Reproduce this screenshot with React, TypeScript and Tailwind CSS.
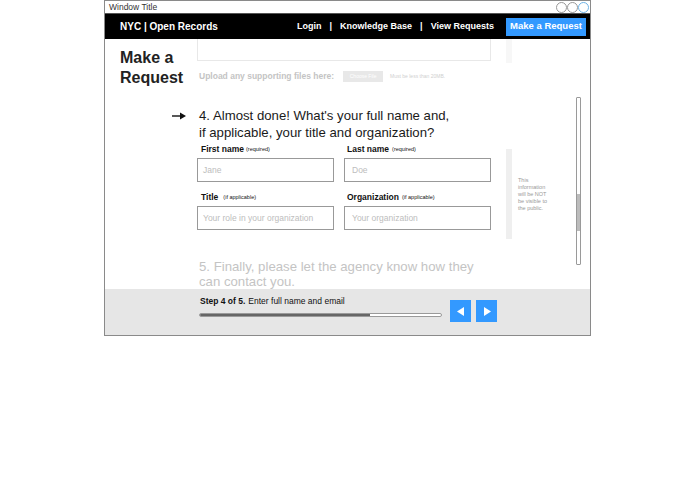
import React from "react";

const font = { fontFamily: '"Liberation Sans", Arial, sans-serif' };

export default function App() {
  return (
    <div className="w-[695px] h-[494px] bg-white" style={font}>
      <div className="ml-[104px] w-[487px] border border-[#8a8a8a] bg-white">
        {/* title bar */}
        <div className="h-[12px] flex items-center justify-between pl-[4px] pr-[1px] bg-white">
          <span className="text-[8.5px] leading-none text-[#333]">Window Title</span>
          <div className="flex">
            <span className="w-[11px] h-[11px] rounded-full border border-[#999] bg-white" />
            <span className="w-[11px] h-[11px] rounded-full border border-[#999] bg-white" />
            <span className="w-[11px] h-[11px] rounded-full border border-[#6fb3e6] bg-white" />
          </div>
        </div>
        {/* nav */}
        <div className="h-[26px] border-t border-[#555] bg-black flex items-center pl-[15px] pr-[4px] text-white font-bold text-[9px]">
          <span className="text-[10px]">NYC | Open Records</span>
          <div className="ml-auto flex items-center">
            <span>Login</span>
            <span className="mx-[8px]">|</span>
            <span>Knowledge Base</span>
            <span className="mx-[8px]">|</span>
            <span>View Requests</span>
            <span className="ml-[12px] w-[80px] h-[18px] bg-[#3399ff] flex items-center justify-center text-[9.5px]">Make a Request</span>
          </div>
        </div>
        {/* content */}
        <div className="h-[250px] flex overflow-hidden">
          <div className="w-[92px] pl-[15px] pt-[9px]">
            <div className="text-[16px] leading-[20px] font-bold text-[#222]">
              Make a<br />Request
            </div>
          </div>
          <div className="w-[294px] flex flex-col">
            <div className="h-[22px] border border-t-0 border-[#e8e8e8]" />
            <div className="mt-[10px] h-[11px] flex items-center pl-[2px]">
              <span className="text-[8.5px] font-bold text-[#c4c4c4]">Upload any supporting files here:</span>
              <span className="ml-[9px] w-[40px] h-[11px] bg-[#e8e8e8] text-white text-[5px] flex items-center justify-center">Choose File</span>
              <span className="ml-[7px] text-[5px] text-[#cfcfcf]">Must be less than 20MB.</span>
            </div>
            <div className="mt-[25px] flex -ml-[25px]">
              <div className="w-[25px] h-[17px] flex items-center">
                <svg width="14" height="8" viewBox="0 0 14 8">
                  <line x1="0" y1="4" x2="11" y2="4" stroke="#111" strokeWidth="1.4" />
                  <polygon points="8,0.5 14,4 8,7.5" fill="#111" />
                </svg>
              </div>
              <div className="pl-[2px] text-[13.2px] leading-[17px] text-[#1a1a1a]">
                4. Almost done! What's your full name and,<br />if applicable, your title and organization?
              </div>
            </div>
            <div className="mt-[3px] grid grid-cols-[137px_147px] gap-x-[10px]">
              <div>
                <div className="h-[10px] flex items-center pl-[4px] text-[8.5px] font-bold text-[#111]">
                  First name<span className="ml-[2px] text-[5.5px] font-normal">(required)</span>
                </div>
                <div className="mt-[4px] h-[24px] border border-[#999] flex items-center pl-[5px] text-[8.5px] text-[#bdbdbd]">Jane</div>
              </div>
              <div>
                <div className="h-[10px] flex items-center pl-[3px] text-[8.5px] font-bold text-[#111]">
                  Last name<span className="ml-[3px] text-[5.5px] font-normal">(required)</span>
                </div>
                <div className="mt-[4px] h-[24px] border border-[#999] flex items-center pl-[7px] text-[8.5px] text-[#bdbdbd]">Doe</div>
              </div>
              <div className="mt-[10px]">
                <div className="h-[10px] flex items-center pl-[4px] text-[8.5px] font-bold text-[#111]">
                  Title<span className="ml-[5px] text-[5.5px] font-normal">(if applicable)</span>
                </div>
                <div className="mt-[4px] h-[24px] border border-[#999] flex items-center pl-[5px] text-[8.5px] text-[#bdbdbd]">Your role in your organization</div>
              </div>
              <div className="mt-[10px]">
                <div className="h-[10px] flex items-center pl-[3px] text-[8.5px] font-bold text-[#111]">
                  Organization<span className="ml-[3px] text-[5.5px] font-normal">(if applicable)</span>
                </div>
                <div className="mt-[4px] h-[24px] border border-[#999] flex items-center pl-[7px] text-[8.5px] text-[#bdbdbd]">Your organization</div>
              </div>
            </div>
            <div className="mt-[29px] pl-[2px] text-[13.2px] leading-[15px] text-[#c4c4c4] whitespace-nowrap">
              5. Finally, please let the agency know how they<br />can contact you.
            </div>
          </div>
          <div className="w-[99px] relative">
            <div className="ml-[15px] w-[6px] h-[24px] bg-[#f7f7f7]" />
            <div className="mt-[86px] ml-[15px] flex items-center">
              <div className="w-[6px] h-[90px] bg-[#efefef]" />
              <div className="ml-[6px] text-[5.5px] leading-[7px] text-[#999] w-[40px]">
                This<br />information<br />will be NOT<br />be visible to<br />the public.
              </div>
            </div>
            <div className="absolute left-[85px] top-[58px] w-[5px] h-[168px] border border-[#9a9a9a] rounded-[1px] bg-white">
              <div className="absolute left-0 right-0 top-[96px] h-[37px] bg-[#bcbcbc]" />
            </div>
          </div>
        </div>
        {/* footer */}
        <div className="h-[46px] bg-[#e6e6e6] flex pl-[94px]">
          <div className="w-[243px] pt-[7px]">
            <div className="h-[10px] flex items-center pl-[1px] text-[8.5px] text-[#111] whitespace-nowrap">
              <span className="font-bold">Step 4 of 5.</span>
              <span className="ml-[3px]">Enter full name and email</span>
            </div>
            <div className="mt-[7px] h-[4px] rounded-full border border-[#9a9a9a] bg-white overflow-hidden">
              <div className="h-full w-[170px] bg-[#666]" />
            </div>
          </div>
          <div className="ml-[8px] mt-[11px] flex gap-[5px]">
            <div className="w-[21px] h-[22px] bg-[#3399ff] flex items-center justify-center">
              <svg width="8" height="9" viewBox="0 0 8 9"><polygon points="7,0 7,9 0,4.5" fill="white" /></svg>
            </div>
            <div className="w-[21px] h-[22px] bg-[#3399ff] flex items-center justify-center">
              <svg width="8" height="9" viewBox="0 0 8 9"><polygon points="1,0 1,9 8,4.5" fill="white" /></svg>
            </div>
          </div>
        </div>
      </div>
    </div>
  );
}
